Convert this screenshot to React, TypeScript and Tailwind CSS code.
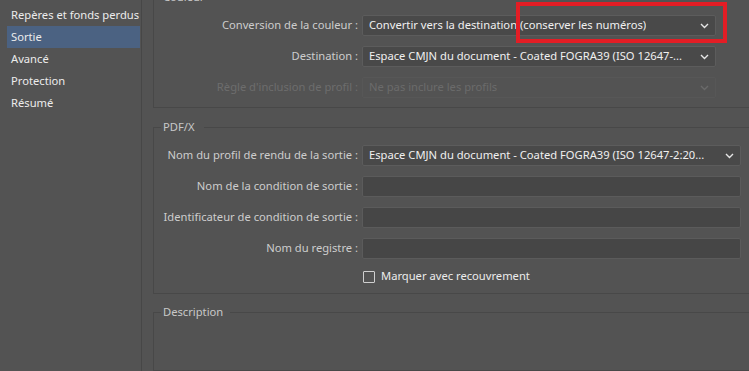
import React from 'react';

const font = { fontFamily: '"Noto Sans", "Liberation Sans", sans-serif' };

function Chevron({ dim }: { dim?: boolean }) {
  return (
    <svg width="9" height="6" viewBox="0 0 9 6" className="shrink-0">
      <polyline points="1,1 4.5,4.5 8,1" fill="none" stroke={dim ? '#6a6a6a' : '#e6e6e6'} strokeWidth="1.4" />
    </svg>
  );
}

function Select({ value, width, disabled }: { value: string; width: string; disabled?: boolean }) {
  return (
    <div
      className={`${width} h-[21px] flex items-center justify-between pl-[6px] pr-[6px] rounded-[2px] border ${
        disabled ? 'bg-[#535353] border-[#575757] text-[#6b6b6b]' : 'bg-[#494949] border-[#5c5c5c] text-[#f0f0f0]'
      }`}
    >
      <span className="whitespace-nowrap overflow-hidden">{value}</span>
      <Chevron dim={disabled} />
    </div>
  );
}

function Input({ width }: { width: string }) {
  return <div className={`${width} h-[21px] rounded-[2px] bg-[#464646] border border-[#5b5b5b]`} />;
}

function Row({ label, disabled, children }: { label: string; disabled?: boolean; children: React.ReactNode }) {
  return (
    <div className="flex items-center">
      <div className={`w-[208px] pr-[4px] text-right whitespace-nowrap ${disabled ? 'text-[#6d6d6d]' : 'text-[#cdcdcd]'}`}>
        {label}
      </div>
      {children}
    </div>
  );
}

export default function App() {
  const items = ['Repères et fonds perdus', 'Sortie', 'Avancé', 'Protection', 'Résumé'];

  return (
    <div className="relative w-[749px] h-[371px] overflow-hidden bg-[#535353] flex text-[11.2px]" style={font}>
      {/* sidebar */}
      <div className="w-[142px] shrink-0 border-r border-[#474747] pt-[4px] pl-[7px] pr-[1px]">
        {items.map((it) => (
          <div
            key={it}
            className={`h-[22px] flex items-center pl-[4px] whitespace-nowrap text-[#ececec] ${it === 'Sortie' ? 'bg-[#4b6282]' : ''}`}
          >
            {it}
          </div>
        ))}
      </div>

      {/* main */}
      <div className="flex-1 pl-[11px] flex flex-col">
        <fieldset className="w-[620px] -mt-[10px] border border-[#484848] pb-[9px] pt-[11px]">
          <legend className="ml-[7px] pl-[2px] pr-[8px] leading-[14px] text-[#c8c8c8]">Couleur</legend>
          <div className="flex flex-col gap-[10px]">
            <Row label="Conversion de la couleur :">
              <Select width="w-[354px]" value="Convertir vers la destination (conserver les numéros)" />
            </Row>
            <Row label="Destination :">
              <Select width="w-[354px]" value="Espace CMJN du document - Coated FOGRA39 (ISO 12647-..." />
            </Row>
            <Row label="Règle d'inclusion de profil :" disabled>
              <Select width="w-[354px]" value="Ne pas inclure les profils" disabled />
            </Row>
          </div>
        </fieldset>

        <fieldset className="w-[620px] mt-[12px] border border-[#484848] pt-[11px] pb-[8px]">
          <legend className="ml-[7px] pl-[2px] pr-[10px] leading-[14px] text-[#c8c8c8]">PDF/X</legend>
          <div className="flex flex-col gap-[10px]">
            <Row label="Nom du profil de rendu de la sortie :">
              <Select width="w-[379px]" value="Espace CMJN du document - Coated FOGRA39 (ISO 12647-2:20..." />
            </Row>
            <Row label="Nom de la condition de sortie :">
              <Input width="w-[379px]" />
            </Row>
            <Row label="Identificateur de condition de sortie :">
              <Input width="w-[379px]" />
            </Row>
            <Row label="Nom du registre :">
              <Input width="w-[379px]" />
            </Row>
          </div>
          <div className="flex items-center h-[17px] mt-[9px] pl-[209px] gap-[6px]">
            <div className="w-[12px] h-[12px] border border-[#cfcfcf] rounded-[1px]" />
            <span className="text-[#ececec] whitespace-nowrap">Marquer avec recouvrement</span>
          </div>
        </fieldset>

        <fieldset className="w-[620px] mt-[11px] flex-1 border border-[#484848]">
          <legend className="ml-[7px] pl-[2px] pr-[7px] leading-[14px] text-[#c8c8c8]">Description</legend>
        </fieldset>
      </div>

      {/* annotation */}
      <div className="absolute left-[516px] top-[2px] w-[211px] h-[41px] border-[4px] border-[#e31d25]" />
    </div>
  );
}
